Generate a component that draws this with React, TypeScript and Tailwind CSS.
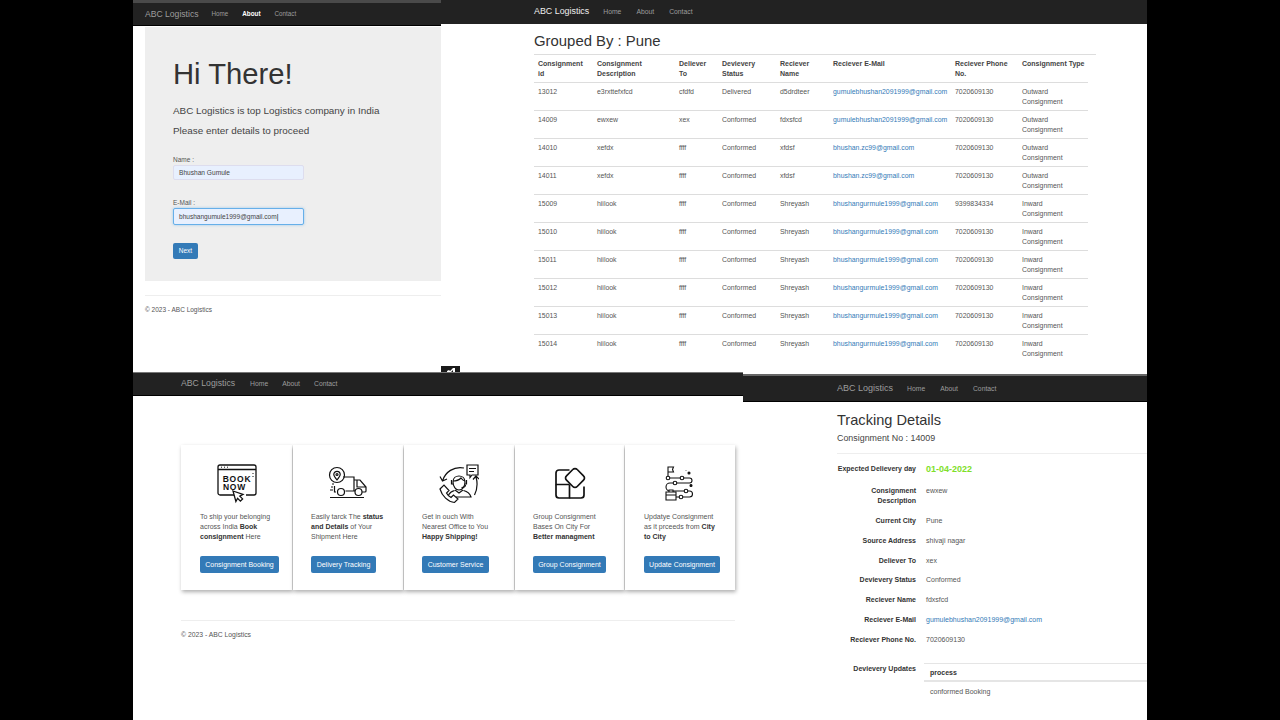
const rows = [
  ["13012", "e3rxttefxfcd", "cfdfd", "Delivered", "d5drdteer", "gumulebhushan2091999@gmail.com", "7020609130", "Outward Consignment"],
  ["14009", "ewxew", "xex", "Conformed", "fdxsfcd", "gumulebhushan2091999@gmail.com", "7020609130", "Outward Consignment"],
  ["14010", "xefdx", "ffff", "Conformed", "xfdsf", "bhushan.zc99@gmail.com", "7020609130", "Outward Consignment"],
  ["14011", "xefdx", "ffff", "Conformed", "xfdsf", "bhushan.zc99@gmail.com", "7020609130", "Outward Consignment"],
  ["15009", "hiilook", "ffff", "Conformed", "Shreyash", "bhushangurmule1999@gmail.com", "9399834334", "Inward Consignment"],
  ["15010", "hiilook", "ffff", "Conformed", "Shreyash", "bhushangurmule1999@gmail.com", "7020609130", "Inward Consignment"],
  ["15011", "hiilook", "ffff", "Conformed", "Shreyash", "bhushangurmule1999@gmail.com", "7020609130", "Inward Consignment"],
  ["15012", "hiilook", "ffff", "Conformed", "Shreyash", "bhushangurmule1999@gmail.com", "7020609130", "Inward Consignment"],
  ["15013", "hiilook", "ffff", "Conformed", "Shreyash", "bhushangurmule1999@gmail.com", "7020609130", "Inward Consignment"],
  ["15014", "hiilook", "ffff", "Conformed", "Shreyash", "bhushangurmule1999@gmail.com", "7020609130", "Inward Consignment"],
];

const headers = [
  ["Consignment id", "w-[59px]"],
  ["Consignment Description", "w-[82px]"],
  ["Deliever To", "w-[43px]"],
  ["Devievery Status", "w-[58px]"],
  ["Reciever Name", "w-[53px]"],
  ["Reciever E-Mail", "w-[122px]"],
  ["Reciever Phone No.", "w-[67px]"],
  ["Consignment Type", "w-[70px]"],
];

function BookIcon() {
  return (
    <svg viewBox="0 0 40 40" className="w-10 h-10" fill="none" stroke="#111" strokeWidth="1.3">
      <path d="M20 31H3a2 2 0 0 1-2-2V3a2 2 0 0 1 2-2h34a2 2 0 0 1 2 2v26a2 2 0 0 1-2 2h-8" />
      <path d="M1 5.500h38" />
      <path d="M4 3.200h1M7 3.200h1M10 3.200h1M36 9v1M36 12v1" strokeWidth="1" />
      <text x="20" y="17.500" textAnchor="middle" fill="#111" stroke="none" fontFamily="Liberation Sans, sans-serif" fontWeight="700" fontSize="8.500" letterSpacing="0.8">BOOK</text>
      <text x="17.500" y="25.500" textAnchor="middle" fill="#111" stroke="none" fontFamily="Liberation Sans, sans-serif" fontWeight="700" fontSize="8.500" letterSpacing="0.8">NOW</text>
      <path d="M16 27l10 3.400-3.200 1.700 2.800 2.800-2.200 2.200-2.800-2.800-1.700 3.200z" fill="#fff" />
    </svg>
  );
}

function TruckIcon() {
  return (
    <svg viewBox="0 0 40 40" className="w-10 h-10" fill="none" stroke="#111" strokeWidth="1.2">
      <circle cx="9" cy="11" r="7.500" />
      <path d="M9 16c-2-2.500-3.200-4-3.200-5.500a3.200 3.200 0 0 1 6.400 0c0 1.500-1.200 3-3.200 5.500z" />
      <circle cx="9" cy="10.500" r="1" />
      <path d="M15 13h11v14H17.500M26 16h6l6 7v4a1 1 0 0 1-1 1h-3M26 27h1M29 16.500v6.500h8.500" />
      <path d="M8 28H6.500V22" />
      <circle cx="13" cy="28" r="3.500" />
      <circle cx="30.500" cy="28" r="3.500" />
      <path d="M2 33.500h34M3 23h2M2 26h3M4 20h2" />
    </svg>
  );
}

function SupportIcon() {
  return (
    <svg viewBox="0 0 40 40" className="w-10 h-10" fill="none" stroke="#111" strokeWidth="1.2">
      <path d="M28 1h11v10h-6l-2 2.500V11h-3zM30 4.500h7M30 7.500h5" />
      <path d="M25 4C15 2 6 8 3.500 17M1 12.500l2.500 4.500 4.500-2" />
      <path d="M37 13c2 7 1 13-1.500 18M34 15.500l3-3.500 3 3" />
      <path d="M14 18c0-8 12-8 12 0 0 5-3 8-6 8s-6-3-6-8z" />
      <path d="M14 17c3 0 6-1 8-3 1 1.500 2.500 2.500 4 3" />
      <path d="M12.500 16v4h1.500M27.500 16v4h-1.500M26.500 21c0 1.500-1.500 2.500-4 2.500" />
      <path d="M15.500 26.500C12 27.500 10.500 29 9.500 31M24.500 26.500c4 1 6.500 3 7.500 6.500H17M16 26l4 3 4-3" />
      <path d="M1 25l4-4 5 5.500-2.500 2.500c1 2 2.500 3.500 4.500 4.500l2.500-2.500 4.500 4-3.500 3.500C9 38 3 32 1 25z" />
    </svg>
  );
}

function GroupIcon() {
  return (
    <svg viewBox="0 0 40 40" className="w-10 h-10" fill="none" stroke="#111" strokeWidth="1.7" strokeLinejoin="round">
      <path d="M19.500 20.500H6V9a3 3 0 0 1 3-3h10.500" />
      <path d="M6 20.500V31a3 3 0 0 0 3 3h10.500V20.500" />
      <path d="M19.500 34H31a3 3 0 0 0 3-3V22.500" />
      <path d="M22.800 5.500a3 3 0 0 1 4.400 0l6.300 6.300a3 3 0 0 1 0 4.400l-6.300 6.300a3 3 0 0 1-4.400 0l-6.300-6.300a3 3 0 0 1 0-4.400z" fill="#fff" />
    </svg>
  );
}

function RouteIcon() {
  return (
    <svg viewBox="0 0 40 40" className="w-10 h-10" fill="none" stroke="#111" strokeWidth="1.100">
      <path d="M8 14V3h5.500l-1 2.500 1 2.500H8" />
      <path d="M8 14h21.500a2.500 2.500 0 0 1 0 5H10a4 4 0 0 0 0 8h19.500a3 3 0 0 1 0 6H16" />
      <circle cx="8" cy="14" r="1.800" fill="#fff" />
      <circle cx="22" cy="14" r="1.800" fill="#fff" />
      <circle cx="15" cy="19" r="1.800" fill="#fff" />
      <circle cx="26" cy="27" r="1.800" fill="#fff" />
      <circle cx="21" cy="33" r="1.800" fill="#fff" />
      <path d="M6 28h10v8H6zM9 28v-2h4v2M6 31h10" fill="#fff" />
      <circle cx="29" cy="9" r="1" fill="#111" />
      <circle cx="31" cy="21.500" r="1" fill="#111" />
      <path d="M26 6v.6" />
    </svg>
  );
}

const cards = [
  { icon: <BookIcon />, w: "w-[111px]", ml: "ml-[19px]", body: <>To ship your belonging across India <b className="text-[#333]">Book consignment</b> Here</>, label: "Consignment Booking", btn: "w-[79px]", text: "w-[76px]" },
  { icon: <TruckIcon />, w: "w-[110px]", ml: "ml-[18px]", body: <>Easily tarck The <b className="text-[#333]">status and Details</b> of Your Shipment Here</>, label: "Delivery Tracking", btn: "w-[65px]", text: "w-[76px]" },
  { icon: <SupportIcon />, w: "w-[110px]", ml: "ml-[18px]", body: <>Get in ouch With Nearest Office to You <b className="text-[#333]">Happy Shipping!</b></>, label: "Customer Service", btn: "w-[67px]", text: "w-[74px]" },
  { icon: <GroupIcon />, w: "w-[109px]", ml: "ml-[18px]", body: <>Group Consignment Bases On City For <b className="text-[#333]">Better managment</b></>, label: "Group Consignment", btn: "w-[73px]", text: "w-[72px]" },
  { icon: <RouteIcon />, w: "w-[110px]", ml: "ml-[19px]", body: <>Updatye Consignment as it prceeds from <b className="text-[#333]">City to City</b></>, label: "Update Consignment", btn: "w-[76px]", text: "w-[72px]" },
];

const details = [
  ["Consignment Description", "ewxew", "h-[30px]"],
  ["Current City", "Pune", "h-[20px]"],
  ["Source Address", "shivaji nagar", "h-[20px]"],
  ["Deliever To", "xex", "h-[19px]"],
  ["Devievery Status", "Conformed", "h-[20px]"],
  ["Reciever Name", "fdxsfcd", "h-[20px]"],
];

function NavLinks({ active, className }: { active?: string; className: string }) {
  return (
    <>
      {["Home", "About", "Contact"].map((l) => (
        <span key={l} className={`${className} ${l === active ? "text-white font-bold" : "text-[#9d9d9d]"}`}>
          {l}
        </span>
      ))}
    </>
  );
}

export default function App() {
  return (
    <div className="w-[1280px] h-[720px] bg-black flex justify-center overflow-hidden font-['Liberation_Sans',Arial,sans-serif] text-[#333]">
      <div className="relative w-[1014px] h-[720px] bg-white overflow-hidden">
        {/* top left: about page */}
        <div className="absolute left-0 top-0 w-[308px] h-[372px] bg-white">
          <nav className="h-[26px] bg-[#222] border-t-[3px] border-[#4a4a4a] border-b border-b-black flex items-center pl-[12px]">
            <span className="text-[8.600px] text-[#9d9d9d] mr-[13px]">ABC Logistics</span>
            <div className="flex gap-[14px]">
              <NavLinks active="About" className="text-[6.300px]" />
            </div>
          </nav>
          <div className="ml-[12px] mt-[1px] h-[254px] bg-[#eee] pl-[28px] pt-[24px]">
            <h1 className="text-[29.200px] leading-[46px] text-[#333]">Hi There!</h1>
            <p className="mt-[7px] text-[9.900px] leading-[14px] text-[#444]">ABC Logistics is top Logistics company in India</p>
            <p className="mt-[6px] text-[9.900px] leading-[14px] text-[#444]">Please enter details to proceed</p>
            <div className="mt-[18px] text-[6.500px] leading-[8px] text-[#555]">Name :</div>
            <div className="mt-[1px] w-[131px] h-[15px] bg-[#e8f0fe] border border-[#dde] rounded-[2px] pl-[5px] text-[6.600px] leading-[13px] text-[#444]">
              Bhushan Gumule
            </div>
            <div className="mt-[19px] text-[6.500px] leading-[8px] text-[#555]">E-Mail :</div>
            <div className="mt-[1px] w-[131px] h-[17px] bg-[#e8f0fe] border border-[#66afe9] rounded-[2px] pl-[5px] text-[6.550px] leading-[15px] text-[#444] shadow-[0_0_3px_rgba(102,175,233,0.6)]">
              bhushangumule1999@gmail.com<span className="text-black">|</span>
            </div>
            <div className="mt-[18px] w-[25px] h-[16px] bg-[#337ab7] rounded-[2px] text-white text-[6.500px] leading-[15px] text-center">
              Next
            </div>
          </div>
          <div className="ml-[12px] mt-[14px] border-t border-[#eee] pt-[10px] text-[6.500px] leading-[8px] text-[#555]">© 2023 - ABC Logistics</div>
        </div>

        {/* top right: grouped table */}
        <div className="absolute left-[308px] top-0 w-[706px] h-[372px] bg-white">
          <nav className="h-[24px] bg-[#222] flex items-center pl-[93px]">
            <span className="text-[8.900px] text-[#eee] mr-[14px]">ABC Logistics</span>
            <div className="flex gap-[15px]">
              <NavLinks className="text-[6.800px]" />
            </div>
          </nav>
          <div className="pl-[93px]">
            <h2 className="mt-[8px] text-[14.900px] leading-[18px]">Grouped By : Pune</h2>
            <div className="mt-[4px] w-[562px] border-t border-[#ddd]" />
            <table className="w-[554px] table-fixed border-collapse">
              <thead>
                <tr className="h-[27px] border-b border-[#ddd]">
                  {headers.map(([h, w]) => (
                    <th key={h} className={`${w} align-top text-left font-bold text-[7px] leading-[10px] pl-[4px] pr-[3px] pt-[4px] text-[#444] ${h === "Consignment Type" ? "whitespace-nowrap" : ""}`}>
                      {h}
                    </th>
                  ))}
                </tr>
              </thead>
              <tbody>
                {rows.map((row) => (
                  <tr key={row[0]} className="h-[28px] border-b border-[#ddd] last:border-b-0">
                    {row.map((c, i) => (
                      <td key={i} className={`align-top text-[6.900px] leading-[10px] pl-[4px] pr-[3px] pt-[4px] ${i === 5 ? "text-[#337ab7] whitespace-nowrap" : "text-[#555]"}`}>
                        {c}
                      </td>
                    ))}
                  </tr>
                ))}
              </tbody>
            </table>
          </div>
        </div>

        {/* small tab showing between the windows */}
        <div className="absolute left-[308px] top-[366px] w-[19px] h-[7px] bg-[#1a1a1a] flex justify-center items-end">
          <svg viewBox="0 0 8 5" className="w-[8px] h-[5px]" fill="#fff">
            <path d="M0 5V3l2-1 1 1 3-3h2v5H6V2L3 5z" />
          </svg>
        </div>

        {/* bottom left: home page */}
        <div className="absolute left-0 top-[372px] w-[610px] h-[348px] bg-white">
          <nav className="h-[24px] bg-[#222] border-t border-[#777] border-b border-b-black flex items-center pl-[48px]">
            <span className="text-[8.700px] text-[#9d9d9d] mr-[15px]">ABC Logistics</span>
            <div className="flex gap-[14px]">
              <NavLinks className="text-[6.800px]" />
            </div>
          </nav>
          <div className="ml-[48px] mt-[49px] flex gap-[1px] w-[554px]">
            {cards.map((c) => (
              <div key={c.label} className={`${c.w} h-[145px] bg-white shadow-[1px_2px_4px_rgba(0,0,0,0.32)] pt-[19px]`}>
                <div className="flex justify-center h-[40px]">{c.icon}</div>
                <p className={`${c.ml} mt-[8px] ${c.text} text-[7px] leading-[10px] text-[#555]`}>{c.body}</p>
                <div className={`${c.ml} mt-[14px] ${c.btn} h-[17px] bg-[#337ab7] rounded-[2px] text-white text-[7px] leading-[17px] text-center whitespace-nowrap`}>
                  {c.label}
                </div>
              </div>
            ))}
          </div>
          <div className="ml-[48px] mt-[30px] w-[554px] border-t border-[#eee] pt-[10px] text-[6.800px] leading-[8px] text-[#555]">© 2023 - ABC Logistics</div>
        </div>

        {/* bottom right: tracking details */}
        <div className="absolute left-[610px] top-[372px] w-[404px] h-[348px] bg-white">
          <div className="h-[2px] bg-white" />
          <nav className="h-[28px] bg-[#222] border-t-[2px] border-[#666] border-b border-b-black flex items-center pl-[94px] pt-[1px]">
            <span className="text-[9px] text-[#9d9d9d] mr-[14px]">ABC Logistics</span>
            <div className="flex gap-[15px]">
              <NavLinks className="text-[6.800px]" />
            </div>
          </nav>
          <div className="pl-[94px]">
            <h2 className="mt-[9px] text-[14.600px] leading-[18px] text-[#333]">Tracking Details</h2>
            <p className="mt-[3px] text-[8.900px] leading-[12px] text-[#444]">Consignment No : 14009</p>
            <div className="mt-[9px] border-t border-[#eee]" />
          </div>
          <div className="mt-[8px] ml-[94px] text-[7px] leading-[10px]">
            <div className="flex gap-[10px] h-[24px] items-start">
              <span className="w-[79px] text-right font-bold leading-[14px]">Expected Delievery day</span>
              <span className="text-[9px] leading-[14px] font-bold text-[#7fe02a]">01-04-2022</span>
            </div>
            {details.map(([k, v, h]) => (
              <div key={k} className={`flex gap-[10px] ${h}`}>
                <span className="w-[79px] text-right font-bold">{k}</span>
                <span className="text-[#555]">{v}</span>
              </div>
            ))}
            <div className="flex gap-[10px] h-[20px]">
              <span className="w-[79px] text-right font-bold">Reciever E-Mail</span>
              <span className="text-[#337ab7]">gumulebhushan2091999@gmail.com</span>
            </div>
            <div className="flex gap-[10px] h-[24px]">
              <span className="w-[79px] text-right font-bold">Reciever Phone No.</span>
              <span className="text-[#555]">7020609130</span>
            </div>
            <div className="flex gap-[10px]">
              <span className="w-[79px] text-right font-bold mt-[5px]">Devievery Updates</span>
              <div className="flex-1">
                <div className="-ml-[2px] mt-[4px] border-t border-[#e5e5e5] border-b-2 border-b-[#e5e5e5] h-[19px] pl-[6px] font-bold leading-[17px]">process</div>
                <div className="pl-[4px] pt-[5px] text-[#555]">conformed Booking</div>
              </div>
            </div>
          </div>
        </div>
      </div>
    </div>
  );
}
